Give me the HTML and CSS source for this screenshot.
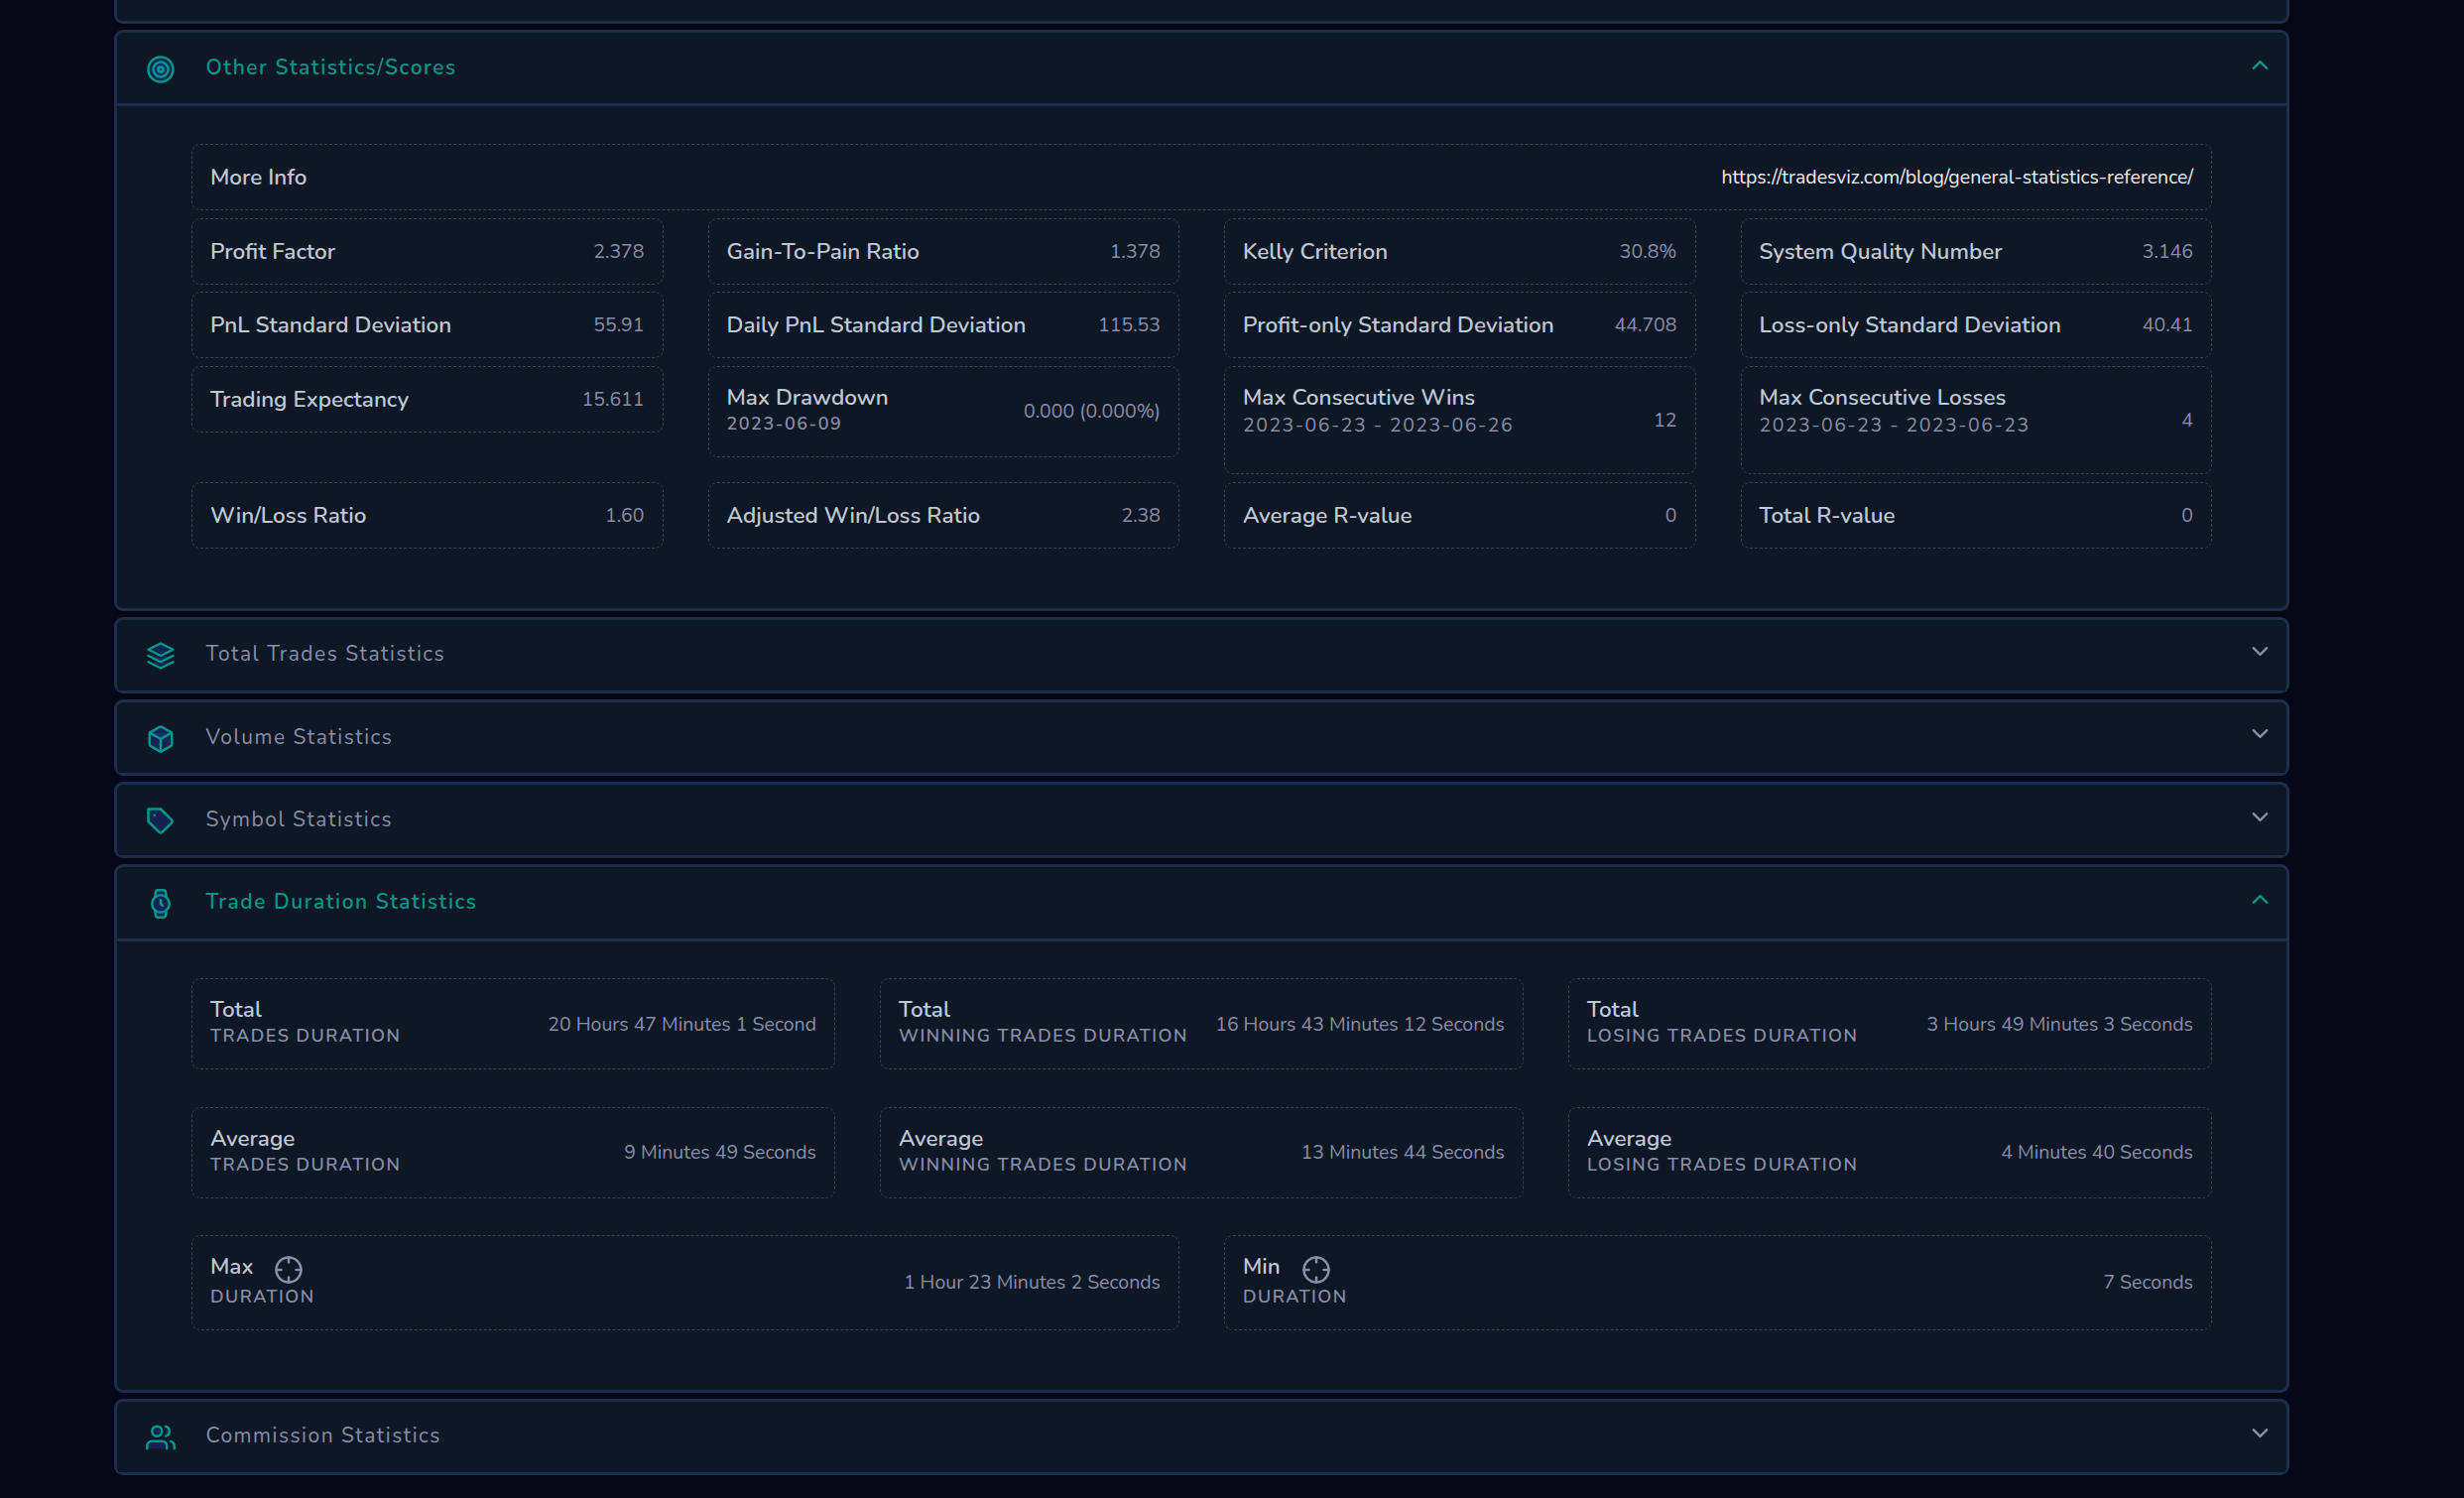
FILE: index.html
```html
<!DOCTYPE html>
<html lang="en">
<head>
    <meta charset="UTF-8">
    <meta name="viewport" content="width=device-width, initial-scale=1.0">
    <title>General Statistics</title>
    <link rel="stylesheet" href="styles.css">
</head>
<body>
    <div class="accordion">
        <section class="panel panel-cut"></section>

        <section class="panel open">
            <header class="panel-header">
                <svg class="icon" viewBox="0 0 24 24"><circle cx="12" cy="12" r="10"/><circle cx="12" cy="12" r="6"/><circle cx="12" cy="12" r="2"/></svg>
                <h4>Other Statistics/Scores</h4>
                <svg class="chevron" viewBox="0 0 24 24"><polyline points="18 15 12 9 6 15"/></svg>
            </header>
            <div class="panel-body scores">
                <div class="card wide"><span class="label">More Info</span><a class="link" href="https://tradesviz.com/blog/general-statistics-reference/">https://tradesviz.com/blog/general-statistics-reference/</a></div>

                <div class="card"><span class="label">Profit Factor</span><span class="value">2.378</span></div>
                <div class="card"><span class="label">Gain-To-Pain Ratio</span><span class="value">1.378</span></div>
                <div class="card"><span class="label">Kelly Criterion</span><span class="value">30.8%</span></div>
                <div class="card"><span class="label">System Quality Number</span><span class="value">3.146</span></div>

                <div class="card"><span class="label">PnL Standard Deviation</span><span class="value">55.91</span></div>
                <div class="card"><span class="label">Daily PnL Standard Deviation</span><span class="value">115.53</span></div>
                <div class="card"><span class="label">Profit-only Standard Deviation</span><span class="value">44.708</span></div>
                <div class="card"><span class="label">Loss-only Standard Deviation</span><span class="value">40.41</span></div>

                <div class="card"><span class="label">Trading Expectancy</span><span class="value">15.611</span></div>
                <div class="card double">
                    <div class="info"><span class="label">Max Drawdown</span><span class="sub">2023-06-09</span></div>
                    <span class="value">0.000 (0.000%)</span>
                </div>
                <div class="card double tall">
                    <div class="info"><span class="label">Max Consecutive Wins</span><span class="sub range">2023-06-23 - 2023-06-26</span></div>
                    <span class="value">12</span>
                </div>
                <div class="card double tall">
                    <div class="info"><span class="label">Max Consecutive Losses</span><span class="sub range">2023-06-23 - 2023-06-23</span></div>
                    <span class="value">4</span>
                </div>

                <div class="card"><span class="label">Win/Loss Ratio</span><span class="value">1.60</span></div>
                <div class="card"><span class="label">Adjusted Win/Loss Ratio</span><span class="value">2.38</span></div>
                <div class="card"><span class="label">Average R-value</span><span class="value">0</span></div>
                <div class="card"><span class="label">Total R-value</span><span class="value">0</span></div>
            </div>
        </section>

        <section class="panel">
            <header class="panel-header">
                <svg class="icon" viewBox="0 0 24 24"><polygon points="12 2 2 7 12 12 22 7 12 2"/><polyline points="2 17 12 22 22 17"/><polyline points="2 12 12 17 22 12"/></svg>
                <h4>Total Trades Statistics</h4>
                <svg class="chevron" viewBox="0 0 24 24"><polyline points="6 9 12 15 18 9"/></svg>
            </header>
        </section>

        <section class="panel">
            <header class="panel-header">
                <svg class="icon" viewBox="0 0 24 24"><path d="M21 16V8a2 2 0 0 0-1-1.73l-7-4a2 2 0 0 0-2 0l-7 4A2 2 0 0 0 3 8v8a2 2 0 0 0 1 1.73l7 4a2 2 0 0 0 2 0l7-4A2 2 0 0 0 21 16z"/><polyline points="3.27 6.96 12 12.01 20.73 6.96"/><line x1="12" y1="22.08" x2="12" y2="12"/></svg>
                <h4>Volume Statistics</h4>
                <svg class="chevron" viewBox="0 0 24 24"><polyline points="6 9 12 15 18 9"/></svg>
            </header>
        </section>

        <section class="panel">
            <header class="panel-header">
                <svg class="icon" viewBox="0 0 24 24"><path d="M20.59 13.41l-7.17 7.17a2 2 0 0 1-2.83 0L2 12V2h10l8.59 8.59a2 2 0 0 1 0 2.82z"/><line x1="7" y1="7" x2="7.01" y2="7"/></svg>
                <h4>Symbol Statistics</h4>
                <svg class="chevron" viewBox="0 0 24 24"><polyline points="6 9 12 15 18 9"/></svg>
            </header>
        </section>

        <section class="panel open">
            <header class="panel-header">
                <svg class="icon" viewBox="0 0 24 24"><circle cx="12" cy="12" r="7"/><polyline points="12 9 12 12 13.5 13.5"/><path d="M16.51 17.35l-.35 3.83a2 2 0 0 1-2 1.82H9.83a2 2 0 0 1-2-1.82l-.35-3.83m.01-10.7l.35-3.83A2 2 0 0 1 9.83 1h4.35a2 2 0 0 1 2 1.82l.35 3.83"/></svg>
                <h4>Trade Duration Statistics</h4>
                <svg class="chevron" viewBox="0 0 24 24"><polyline points="18 15 12 9 6 15"/></svg>
            </header>
            <div class="panel-body durations">
                <div class="card double">
                    <div class="info"><span class="label">Total</span><span class="sub">TRADES DURATION</span></div>
                    <span class="value">20 Hours 47 Minutes 1 Second</span>
                </div>
                <div class="card double">
                    <div class="info"><span class="label">Total</span><span class="sub">WINNING TRADES DURATION</span></div>
                    <span class="value">16 Hours 43 Minutes 12 Seconds</span>
                </div>
                <div class="card double">
                    <div class="info"><span class="label">Total</span><span class="sub">LOSING TRADES DURATION</span></div>
                    <span class="value">3 Hours 49 Minutes 3 Seconds</span>
                </div>

                <div class="card double">
                    <div class="info"><span class="label">Average</span><span class="sub">TRADES DURATION</span></div>
                    <span class="value">9 Minutes 49 Seconds</span>
                </div>
                <div class="card double">
                    <div class="info"><span class="label">Average</span><span class="sub">WINNING TRADES DURATION</span></div>
                    <span class="value">13 Minutes 44 Seconds</span>
                </div>
                <div class="card double">
                    <div class="info"><span class="label">Average</span><span class="sub">LOSING TRADES DURATION</span></div>
                    <span class="value">4 Minutes 40 Seconds</span>
                </div>

                <div class="card double half">
                    <div class="info">
                        <span class="label">Max <svg class="crosshair" viewBox="0 0 24 24"><circle cx="12" cy="12" r="10"/><line x1="22" y1="12" x2="18" y2="12"/><line x1="6" y1="12" x2="2" y2="12"/><line x1="12" y1="6" x2="12" y2="2"/><line x1="12" y1="22" x2="12" y2="18"/></svg></span>
                        <span class="sub">DURATION</span>
                    </div>
                    <span class="value">1 Hour 23 Minutes 2 Seconds</span>
                </div>
                <div class="card double half">
                    <div class="info">
                        <span class="label">Min <svg class="crosshair" viewBox="0 0 24 24"><circle cx="12" cy="12" r="10"/><line x1="22" y1="12" x2="18" y2="12"/><line x1="6" y1="12" x2="2" y2="12"/><line x1="12" y1="6" x2="12" y2="2"/><line x1="12" y1="22" x2="12" y2="18"/></svg></span>
                        <span class="sub">DURATION</span>
                    </div>
                    <span class="value">7 Seconds</span>
                </div>
            </div>
        </section>

        <section class="panel">
            <header class="panel-header">
                <svg class="icon" viewBox="0 0 24 24"><path d="M17 21v-2a4 4 0 0 0-4-4H5a4 4 0 0 0-4 4v2"/><circle cx="9" cy="7" r="4"/><path d="M23 21v-2a4 4 0 0 0-3-3.87"/><path d="M16 3.13a4 4 0 0 1 0 7.75"/></svg>
                <h4>Commission Statistics</h4>
                <svg class="chevron" viewBox="0 0 24 24"><polyline points="6 9 12 15 18 9"/></svg>
            </header>
        </section>
    </div>
</body>
</html>
```

FILE: styles.css
```css
* {
    box-sizing: border-box;
}
body {
    margin: 0;
    background-color: #060818;
    color: #888ea8;
    font-family: Nunito, Lato, sans-serif;
}
.accordion {
    display: flex;
    flex-direction: column;
    gap: 6px;
    width: 2193px;
    margin-left: 115px;
}

/* panels */
.panel {
    background-color: #0e1726;
    border: 3px solid #1b2e4b;
    border-bottom: 0;
    border-radius: 9px;
    overflow: hidden;
}
.panel.open {
    border-bottom: 3px solid #1b2e4b;
}
.panel-cut {
    height: 24.2px;
    border-top: 0;
    border-bottom: 3px solid #1b2e4b;
    border-radius: 0 0 9px 9px;
}
.panel-header {
    display: flex;
    align-items: center;
    height: 74.2px;
    padding: 0 13px 0 29px;
    border-bottom: 3px solid #1b2e4b;
}
.panel-header h4 {
    flex: 1;
    margin: 0 0 2px 30.5px;
    font-size: 21px;
    font-weight: 400;
    line-height: 30px;
    letter-spacing: 1.5px;
}
.panel.open h4 {
    color: #009688;
    font-weight: 600;
}
svg {
    fill: none;
    stroke: currentColor;
    stroke-width: 2;
    stroke-linecap: round;
    stroke-linejoin: round;
}
.icon {
    width: 30px;
    height: 30px;
    margin-top: 2px;
    color: #009688;
    fill: rgba(27, 85, 226, 0.24);
}
.chevron {
    width: 27px;
    height: 27px;
    margin-bottom: 7.5px;
}
.open .chevron {
    color: #009688;
}

/* cards */
.panel-body {
    display: grid;
    padding: 37.45px 75px 60px;
}
.scores {
    grid-template-columns: repeat(4, 1fr);
    grid-template-rows: 67.2px 67.2px 67.2px 109.3px 67.2px;
    gap: 7.5px 45px;
    align-items: start;
}
.durations {
    grid-template-columns: repeat(6, 1fr);
    gap: 37.5px 45px;
}
.durations .card {
    grid-column: span 2;
}
.durations .half {
    grid-column: span 3;
    height: 95.6px;
}
.card {
    display: flex;
    justify-content: space-between;
    align-items: center;
    height: 67.2px;
    padding: 0 18px;
    border: 1px dashed #3b3f5c;
    border-radius: 9px;
    white-space: nowrap;
}
.wide {
    grid-column: 1 / -1;
}
.double {
    height: 92px;
}
.tall {
    height: 109.3px;
}
.info {
    display: flex;
    flex-direction: column;
    align-self: flex-start;
    padding-top: 17.4px;
}
.label {
    color: #bfc9d4;
    font-size: 22.5px;
    font-weight: 600;
    line-height: 28px;
}
.card > .label {
    margin-top: 1px;
}
.sub {
    font-size: 18px;
    font-weight: 600;
    line-height: 25px;
    letter-spacing: 1.5px;
}
.range {
    font-size: 19.5px;
    font-weight: 400;
    line-height: 28px;
}
.half .label {
    display: flex;
    gap: 21px;
}
.half .sub {
    margin-top: 4px;
}
.crosshair {
    width: 30px;
    height: 30px;
    margin: 1.5px 0 -3.5px;
    color: #888ea8;
}
.value {
    font-size: 19.5px;
}
.link {
    color: #ebedf2;
    font-size: 19.5px;
    text-decoration: none;
}
```
